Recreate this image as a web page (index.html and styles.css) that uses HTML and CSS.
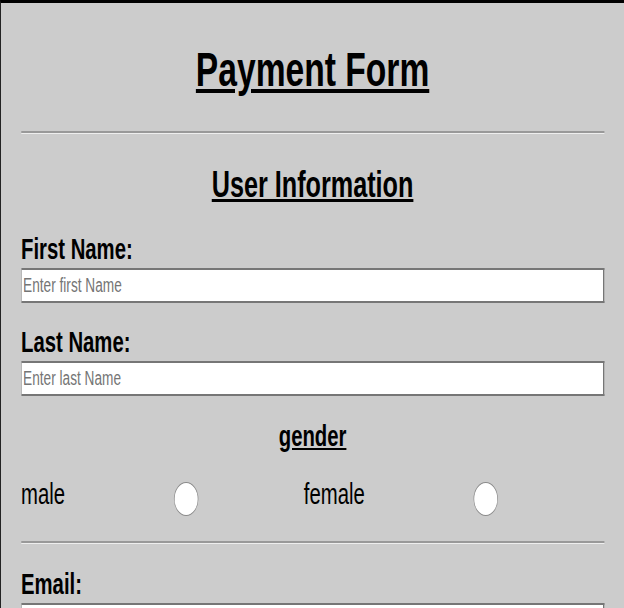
FILE: index.html
```html
<!DOCTYPE html>
<html lang="en">
<head>
<meta charset="utf-8">
<title>Payment Form</title>
<link rel="stylesheet" href="styles.css">
</head>
<body>
<form class="page">
  <h1 class="title">Payment Form</h1>
  <hr class="rule">
  <h2 class="section">User Information</h2>
  <label class="label" for="first">First Name:</label>
  <input class="field" id="first" type="text" placeholder="Enter first Name">
  <label class="label label-next" for="last">Last Name:</label>
  <input class="field" id="last" type="text" placeholder="Enter last Name">
  <p class="gender">gender</p>
  <div class="gender-row">
    <span class="opt">male</span>
    <input class="radio" type="radio" name="gender" value="male">
    <span class="opt">female</span>
    <input class="radio" type="radio" name="gender" value="female">
  </div>
  <hr class="rule rule-2">
  <label class="label label-email" for="email">Email:</label>
  <input class="field" id="email" type="email">
</form>
</body>
</html>
```
FILE: styles.css
```css
html {
  overflow: hidden;
}
body {
  margin: 0;
  background: #cccccc;
  border-top: 3px solid #000;
  border-left: 1px solid #222;
  height: 605px;
  overflow: hidden;
  font-family: "Liberation Sans", Arial, sans-serif;
  color: #000;
}
.page {
  width: 888px;
  box-sizing: border-box;
  padding: 0 26.4px 0 28.6px;
  transform: scaleX(0.7);
  transform-origin: 0 0;
  display: flex;
  flex-direction: column;
}
.title {
  margin: 39px 0 0;
  font-size: 48px;
  line-height: 55px;
  font-weight: bold;
  text-align: center;
  text-decoration: underline;
}
.rule {
  width: 100%;
  margin: 34px 0 0;
  height: 0;
  border: none;
  border-top: 2px solid #999;
  border-bottom: 1px solid #eee;
}
.rule-2 {
  margin-top: 25px;
}
.section {
  margin: 30px 0 0;
  font-size: 36px;
  line-height: 41px;
  font-weight: bold;
  text-align: center;
  text-decoration: underline;
}
.label {
  margin-top: 28px;
  font-size: 29px;
  line-height: 33px;
  font-weight: bold;
}
.label-next {
  margin-top: 23px;
}
.label-email {
  margin-top: 24px;
}
.field {
  margin: 2px 0 0;
  height: 35px;
  box-sizing: border-box;
  background: #fff;
  border-top: 2px solid #767676;
  border-right: 2px solid #767676;
  border-bottom: 2px solid #767676;
  border-left: 1px solid #a0a0a0;
  padding: 0 2px;
  font-family: "Liberation Sans", Arial, sans-serif;
  font-size: 19.5px;
  color: #000;
}
.field::placeholder {
  color: #757575;
}
.gender {
  margin: 24px 0 0;
  font-size: 29px;
  line-height: 33px;
  font-weight: bold;
  text-align: center;
  text-decoration: underline;
}
.gender-row {
  margin-top: 25px;
  display: grid;
  grid-template-columns: 218px 186px 242px 1fr;
  align-items: start;
}
.opt {
  font-size: 29px;
  line-height: 33px;
}
.radio {
  appearance: none;
  margin: 4px 0 0;
  width: 35px;
  height: 34px;
  border-radius: 50%;
  border: 1px solid #8a8a8a;
  background: #fff;
}
```
